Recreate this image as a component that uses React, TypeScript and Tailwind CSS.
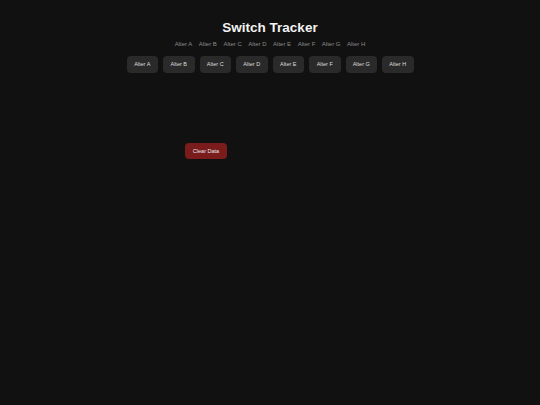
import React from 'react';

const switches = ['A', 'B', 'C', 'D', 'E', 'F', 'G', 'H'];

export default function App() {
  return (
    <div
      className="min-h-[405px] w-full bg-[#111111] text-white"
      style={{ fontFamily: '"Liberation Sans", Arial, sans-serif' }}
    >
      <div className="flex flex-col items-center pt-[19px]">
        <h1 className="text-[13.5px] font-bold leading-[17px] text-[#f3f3f3]">Switch Tracker</h1>

        {/* labels */}
        <div className="mt-[4px] flex gap-[6.5px] text-[6px] leading-[8px] text-[#8a8a8a]">
          {switches.map((s) => (
            <span key={s}>Alter {s}</span>
          ))}
        </div>

        {/* buttons */}
        <div className="mt-[8px] flex gap-[5px]">
          {switches.map((s) => (
            <button
              key={s}
              className="h-[17px] w-[31.5px] rounded-[4px] bg-[#2a2a2a] text-[5.5px] text-[#dddddd]"
            >
              Alter {s}
            </button>
          ))}
        </div>
      </div>

      <div className="mt-[63px] pl-[185px]">
        <button className="h-[16px] w-[42px] rounded-[4px] bg-[#7a1c1c] text-[5.5px] text-[#e8e8e8]">
          Clear Data
        </button>
      </div>
    </div>
  );
}
